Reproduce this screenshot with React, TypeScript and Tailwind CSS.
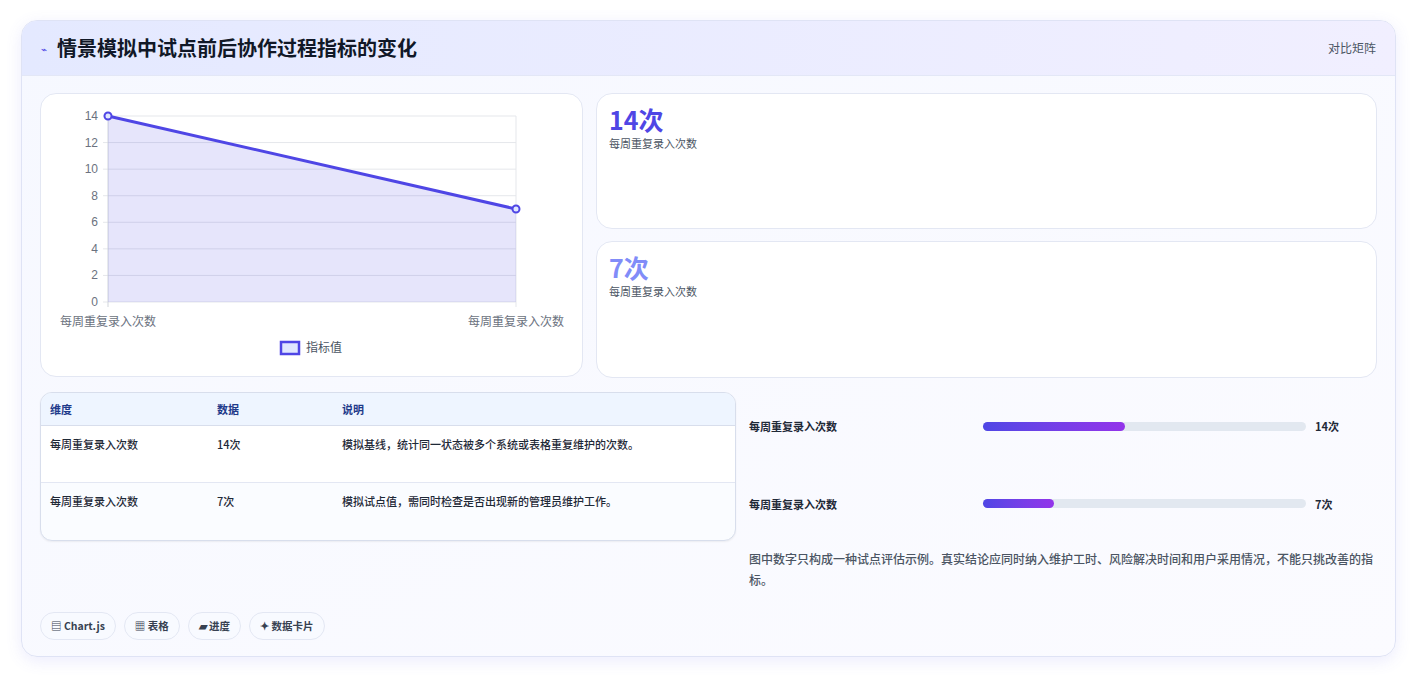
const font = { fontFamily: '"Noto Sans CJK SC", "Noto Sans", sans-serif' };

function LineChart() {
  const x0 = 67, x1 = 475, yTop = 22, yBot = 208;
  const y = (v: number) => yBot - (v / 14) * (yBot - yTop);
  const ticks = [0, 2, 4, 6, 8, 10, 12, 14];
  return (
    <svg width="540" height="281" className="block">
      {ticks.map((t) => (
        <g key={t}>
          <line x1={x0 - 5} x2={x1} y1={y(t)} y2={y(t)} stroke="#e5e7eb" />
          <text x={x0 - 10} y={y(t) + 4} textAnchor="end" fontSize="12" fill="#6b7280" style={{ fontFamily: '"Liberation Sans", sans-serif' }}>{t}</text>
        </g>
      ))}
      <line x1={x0} x2={x0} y1={yTop} y2={yBot + 5} stroke="#d1d5db" />
      <line x1={x1} x2={x1} y1={yTop} y2={yBot + 5} stroke="#e5e7eb" />
      <polygon points={`${x0},${y(14)} ${x1},${y(7)} ${x1},${yBot} ${x0},${yBot}`} fill="#4f46e5" fillOpacity="0.14" />
      <line x1={x0} y1={y(14)} x2={x1} y2={y(7)} stroke="#4f46e5" strokeWidth="3" />
      <circle cx={x0} cy={y(14)} r="3.5" fill="#e0e7ff" stroke="#4f46e5" strokeWidth="2" />
      <circle cx={x1} cy={y(7)} r="3.5" fill="#e0e7ff" stroke="#4f46e5" strokeWidth="2" />
      <text x={x0} y="232" textAnchor="middle" fontSize="12" fill="#6b7280">每周重复录入次数</text>
      <text x={x1} y="232" textAnchor="middle" fontSize="12" fill="#6b7280">每周重复录入次数</text>
      <rect x="240" y="248" width="18" height="12" fill="#e0e7ff" stroke="#4f46e5" strokeWidth="2.5" />
      <text x="265" y="258" fontSize="12" fill="#4b5563">指标值</text>
    </svg>
  );
}

const rows = [
  { d: "每周重复录入次数", v: "14次", n: "模拟基线，统计同一状态被多个系统或表格重复维护的次数。" },
  { d: "每周重复录入次数", v: "7次", n: "模拟试点值，需同时检查是否出现新的管理员维护工作。" },
];

export default function App() {
  return (
    <div className="min-h-screen bg-white px-[21px] pt-[20px]" style={font}>
      <div className="h-[637px] overflow-hidden rounded-2xl border border-[#dfe3f5] bg-gradient-to-br from-[#f6f8ff] to-[#fbfbff] shadow-[0_4px_16px_rgba(99,102,241,0.12)]">
        <div className="flex h-[55px] items-center justify-between border-b border-[#e3e7f6] bg-gradient-to-r from-[#e4e9ff] to-[#f1efff] px-[19px]">
          <div className="flex items-center gap-[10px]">
            <span className="text-[10px] text-[#4f46e5]">⌁</span>
            <h1 className="text-[20px] font-bold text-[#111827]">情景模拟中试点前后协作过程指标的变化</h1>
          </div>
          <span className="text-[12px] text-[#4b5563]">对比矩阵</span>
        </div>
        <div className="px-[18px] pt-[17px]">
          <div className="flex gap-[13px]">
            <div className="h-[284px] w-[543px] rounded-2xl border border-[#e3e7f3] bg-white">
              <LineChart />
            </div>
            <div className="flex flex-1 flex-col gap-[12px]">
              <div className="h-[136px] rounded-2xl border border-[#e3e7f3] bg-white px-[12px] pt-[9px]">
                <div className="text-[25px] font-bold leading-[32px] text-[#4f46e5]">14次</div>
                <div className="text-[11px] text-[#4b5563]">每周重复录入次数</div>
              </div>
              <div className="h-[137px] rounded-2xl border border-[#e3e7f3] bg-white px-[12px] pt-[9px]">
                <div className="text-[25px] font-bold leading-[32px] text-[#818cf8]">7次</div>
                <div className="text-[11px] text-[#4b5563]">每周重复录入次数</div>
              </div>
            </div>
          </div>
          <div className="mt-[14px] flex gap-[13px]">
            <div className="w-[696px]">
              <div className="overflow-hidden rounded-xl border border-[#d8deec] bg-[#fafcff] text-[11px] shadow-[0_1px_2px_rgba(0,0,0,0.06)]">
                <div className="flex h-[33px] items-center border-b border-[#d8deec] bg-[#eef5ff] px-[9px] font-bold text-[#1e3a8a]">
                  <div className="w-[167px]">维度</div>
                  <div className="w-[125px]">数据</div>
                  <div>说明</div>
                </div>
                {rows.map((r, i) => (
                  <div key={i} className={`flex h-[57px] px-[9px] pt-[10px] font-medium text-[#1f2937] ${i === 0 ? "border-b border-[#e3e7f3] bg-white" : ""}`}>
                    <div className="w-[167px]">{r.d}</div>
                    <div className="w-[125px]">{r.v}</div>
                    <div>{r.n}</div>
                  </div>
                ))}
              </div>
              <div className="mt-[71px] flex gap-[8px]">
                {["▤ Chart.js", "▦ 表格", "▰ 进度", "✦ 数据卡片"].map((c) => (
                  <span key={c} className="rounded-full border border-[#e3e7f3] bg-[#f8faff] px-[10px] py-[5px] text-[10.5px] font-bold text-[#374151]">{c}</span>
                ))}
              </div>
            </div>
            <div className="flex-1">
              {[{ v: "14次", w: "44%" }, { v: "7次", w: "22%" }].map((b, i) => (
                <div key={i} className={`flex items-center ${i === 0 ? "mt-[26px]" : "mt-[61px]"}`}>
                  <div className="w-[234px] text-[11px] font-bold text-[#1f2937]">每周重复录入次数</div>
                  <div className="h-[9px] w-[323px] rounded-full bg-[#e2e8f0]">
                    <div className="h-full rounded-full bg-gradient-to-r from-[#4f46e5] to-[#9333ea]" style={{ width: b.w }} />
                  </div>
                  <div className="ml-[9px] text-[11px] font-bold text-[#1f2937]">{b.v}</div>
                </div>
              ))}
              <p className="mt-[36px] max-w-[628px] text-[12px] font-medium leading-[21px] text-[#4b5563]">图中数字只构成一种试点评估示例。真实结论应同时纳入维护工时、风险解决时间和用户采用情况，不能只挑改善的指标。</p>
            </div>
          </div>
        </div>
      </div>
    </div>
  );
}
